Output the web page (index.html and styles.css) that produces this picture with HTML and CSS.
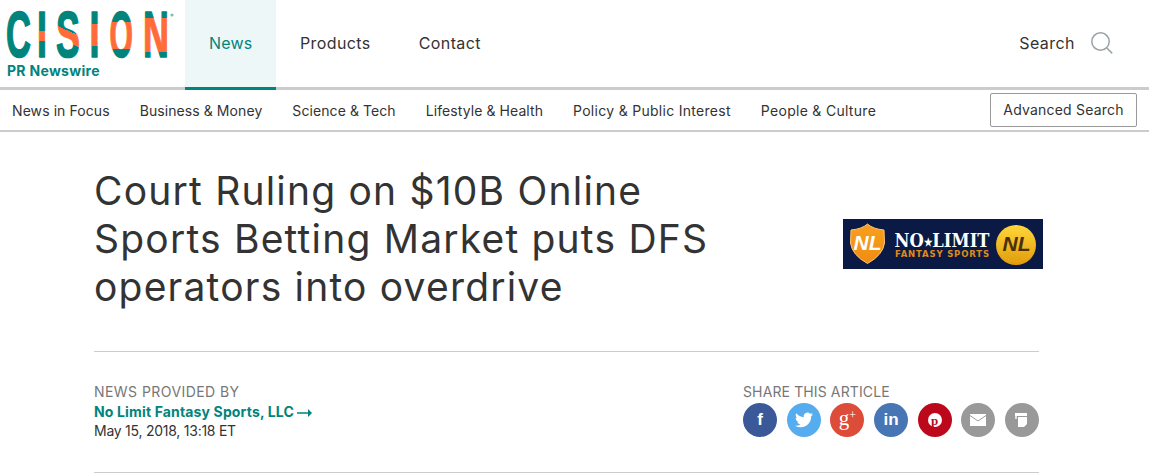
FILE: index.html
```html
<!DOCTYPE html>
<html lang="en">
<head>
<meta charset="utf-8">
<title>Court Ruling on $10B Online Sports Betting Market</title>
<link rel="stylesheet" href="styles.css">
</head>
<body>
<header class="topbar">
  <a class="logo" href="#">
    <svg class="logo-mark" width="172" height="50" viewBox="0 0 172 50" aria-label="Cision">
      <defs>
        <linearGradient id="gi1" gradientUnits="userSpaceOnUse" x1="0" y1="-46" x2="0" y2="0">
          <stop offset=".439" stop-color="#00847c"/><stop offset=".439" stop-color="#ff6c3a"/><stop offset=".657" stop-color="#ff6c3a"/><stop offset=".657" stop-color="#00847c"/>
        </linearGradient>
        <linearGradient id="gs" gradientUnits="userSpaceOnUse" x1="22.3" y1="-36" x2="15.2" y2="-6.8">
          <stop offset=".324" stop-color="#00847c"/><stop offset=".324" stop-color="#ff6c3a"/><stop offset=".713" stop-color="#ff6c3a"/><stop offset=".713" stop-color="#00847c"/>
        </linearGradient>
        <linearGradient id="gi2" gradientUnits="userSpaceOnUse" x1="0" y1="-46" x2="0" y2="0">
          <stop offset=".287" stop-color="#00847c"/><stop offset=".287" stop-color="#ff6c3a"/><stop offset=".765" stop-color="#ff6c3a"/><stop offset=".765" stop-color="#00847c"/>
        </linearGradient>
        <linearGradient id="go" gradientUnits="userSpaceOnUse" x1="0" y1="-46" x2="0" y2="0">
          <stop offset=".243" stop-color="#00847c"/><stop offset=".243" stop-color="#ff6c3a"/><stop offset=".83" stop-color="#ff6c3a"/><stop offset=".83" stop-color="#00847c"/>
        </linearGradient>
        <linearGradient id="gn" gradientUnits="userSpaceOnUse" x1="0" y1="-46" x2="0" y2="0">
          <stop offset=".15" stop-color="#00847c"/><stop offset=".15" stop-color="#ff6c3a"/><stop offset=".9" stop-color="#ff6c3a"/><stop offset=".9" stop-color="#00847c"/>
        </linearGradient>
      </defs>
      <g class="logo-letters">
        <text transform="translate(6 47.8) scale(.54 1)" fill="#00847c" stroke="#00847c">C</text>
        <text transform="translate(37 47.8) scale(.56 1)" fill="url(#gi1)" stroke="url(#gi1)">I</text>
        <text transform="translate(56 47.8) scale(.56 1)" fill="url(#gs)" stroke="url(#gs)">S</text>
        <text transform="translate(89.5 47.8) scale(.56 1)" fill="url(#gi2)" stroke="url(#gi2)">I</text>
        <text transform="translate(109.5 47.8) scale(.47 1)" fill="url(#go)" stroke="url(#go)">O</text>
        <text transform="translate(143 47.8) scale(.56 1)" fill="url(#gn)" stroke="url(#gn)">N</text>
      </g>
      <circle cx="172" cy="6" r="1.6" fill="#7fbcb8"/>
    </svg>
    <span class="logo-sub">PR Newswire</span>
  </a>
  <nav class="mainnav">
    <a class="mainnav-item is-active" href="#">News</a>
    <a class="mainnav-item" href="#">Products</a>
    <a class="mainnav-item" href="#">Contact</a>
  </nav>
  <div class="search">
    <span>Search</span>
    <svg width="24" height="24" viewBox="0 0 24 24" fill="none" stroke="#9aa2a6" stroke-width="1.5"><circle cx="10.5" cy="10.5" r="8.7"/><path d="M16.8 17l5.4 5.4"/></svg>
  </div>
</header>

<div class="subbar">
  <nav class="subnav">
    <a href="#">News in Focus</a>
    <a href="#">Business &amp; Money</a>
    <a href="#">Science &amp; Tech</a>
    <a href="#">Lifestyle &amp; Health</a>
    <a class="subnav-wide" href="#">Policy &amp; Public Interest</a>
    <a class="subnav-wide" href="#">People &amp; Culture</a>
  </nav>
  <a class="adv" href="#">Advanced Search</a>
</div>

<main class="article">
  <div class="headline-row">
    <h1>Court Ruling on $10B Online Sports Betting Market puts DFS operators into overdrive</h1>
    <svg class="banner" width="200" height="50" viewBox="0 0 200 50" aria-label="No Limit Fantasy Sports">
      <defs>
        <linearGradient id="coin" x1="0" y1="0" x2="0" y2="1"><stop offset="0" stop-color="#ffd83a"/><stop offset="1" stop-color="#e09a0c"/></linearGradient>
        <linearGradient id="shield" x1="0" y1="0" x2="0" y2="1"><stop offset="0" stop-color="#f9a01e"/><stop offset="1" stop-color="#ef8c12"/></linearGradient>
      </defs>
      <rect width="200" height="50" fill="#0a1a44"/>
      <path d="M8 11Q19 10 24.5 5Q30 10 41 11L41.5 24Q40 36 24.5 44.5Q9 36 7.5 24Z" fill="url(#shield)" stroke="#fbc67a" stroke-width="1"/>
      <text class="bn-mono" x="24.5" y="31" fill="#fff">NL</text>
      <text class="bn-main" x="51.5" y="28" textLength="95" lengthAdjust="spacingAndGlyphs">NO<tspan class="bn-star" dy="-1">★</tspan><tspan dy="1">LIMIT</tspan></text>
      <text class="bn-sub" x="52" y="37.5" textLength="94" lengthAdjust="spacing">FANTASY SPORTS</text>
      <circle cx="173" cy="26" r="20" fill="url(#coin)"/>
      <circle cx="173" cy="26" r="16.5" fill="none" stroke="#f6c02a" stroke-width=".8" stroke-dasharray="1 2"/>
      <text class="bn-mono" x="173.5" y="32" fill="#4a3006">NL</text>
    </svg>
  </div>

  <div class="meta">
    <div class="provider">
      <div class="label label-news">NEWS PROVIDED BY</div>
      <a class="provider-name" href="#">No Limit Fantasy Sports, LLC <svg class="arrow" width="15" height="8" viewBox="0 0 15 8"><path d="M0 3.2h11V0l4 4-4 4V4.8H0z" fill="#00847c"/></svg></a>
      <div class="date">May 15, 2018, 13:18 ET</div>
    </div>
    <div class="share">
      <div class="label label-share">SHARE THIS ARTICLE</div>
      <div class="share-icons">
        <a class="ic ic-fb" href="#">f</a>
        <a class="ic ic-tw" href="#"><svg width="18" height="18" viewBox="0 0 24 24" fill="#fff"><path d="M23.953 4.57a10 10 0 01-2.825.775 4.958 4.958 0 002.163-2.723c-.951.555-2.005.959-3.127 1.184a4.92 4.92 0 00-8.384 4.482C7.69 8.095 4.067 6.13 1.64 3.162a4.822 4.822 0 00-.666 2.475c0 1.71.87 3.213 2.188 4.096a4.904 4.904 0 01-2.228-.616v.06a4.923 4.923 0 003.946 4.827 4.996 4.996 0 01-2.212.085 4.936 4.936 0 004.604 3.417 9.867 9.867 0 01-6.102 2.105c-.39 0-.779-.023-1.17-.067a13.995 13.995 0 007.557 2.209c9.053 0 13.998-7.496 13.998-13.985 0-.21 0-.42-.015-.63A9.935 9.935 0 0024 4.59z"/></svg></a>
        <a class="ic ic-gp" href="#">g<span class="plus">+</span></a>
        <a class="ic ic-in" href="#">in</a>
        <a class="ic ic-pin" href="#"><span class="pin-disc">p</span></a>
        <a class="ic ic-mail" href="#"><svg width="16" height="12" viewBox="0 0 16 12"><rect width="16" height="12" fill="#fff"/><path d="M0 1.5l8 5.5 8-5.5" fill="none" stroke="#999" stroke-width="1"/></svg></a>
        <a class="ic ic-print" href="#"><svg width="13" height="14" viewBox="0 0 13 14" fill="#fff"><path d="M0 0h12v3H0z"/><path d="M0 3h2v3H0z" opacity=".7"/><path d="M3 4h9v7l-3 3H3z"/></svg></a>
      </div>
    </div>
  </div>
</main>
</body>
</html>
```
FILE: styles.css
```css
* { box-sizing: border-box; }
html, body { margin: 0; padding: 0; }
body {
  font-family: Inter, "Noto Sans", "Liberation Sans", sans-serif;
  color: #333;
  background: #fff;
  overflow: hidden;
}
a { color: inherit; text-decoration: none; }

.topbar {
  height: 90px;
  display: flex;
  align-items: stretch;
  border-bottom: 3px solid #ccc;
}
.logo {
  width: 185px;
  flex: none;
  display: flex;
  flex-direction: column;
  padding-top: 9px;
}
.logo-mark { display: block; overflow: visible; }
.logo-letters text {
  font-family: "Liberation Sans", sans-serif;
  font-weight: 700;
  font-size: 64px;
  stroke-width: 1.6;
  stroke-linejoin: round;
}
.logo-sub {
  margin: 4px 0 0 7px;
  font-size: 14px;
  line-height: 16px;
  font-weight: 700;
  letter-spacing: .3px;
  color: #00847c;
}
.mainnav { display: flex; align-items: stretch; height: 90px; }
.mainnav-item {
  display: flex;
  align-items: center;
  padding: 0 24px 5px;
  font-size: 16px;
  letter-spacing: .4px;
  height: 90px;
  color: #333;
}
.mainnav-item.is-active {
  width: 91px;
  background: #eef7f8;
  color: #00847c;
  border-bottom: 3px solid #00847c;
  padding-bottom: 2px;
  letter-spacing: .15px;
}
.search {
  margin-left: auto;
  padding: 0 35px 2px 0;
  display: flex;
  align-items: center;
  gap: 15px;
  font-size: 16px;
  letter-spacing: .45px;
}

.subbar {
  height: 42px;
  border-bottom: 2px solid #ccc;
  padding: 3px 12px 3px 12px;
  display: flex;
  align-items: center;
  justify-content: space-between;
}
.subnav { display: flex; gap: 30px; font-size: 14px; letter-spacing: .08px; }
.subnav-wide { letter-spacing: .29px; }
.adv {
  width: 147px;
  height: 34px;
  border: 1px solid #999;
  border-radius: 2px;
  font-size: 14px;
  letter-spacing: .2px;
  padding-bottom: 2px;
  display: flex;
  align-items: center;
  justify-content: center;
}

.article { margin: 0 110px 0 94px; }
.headline-row {
  display: flex;
  justify-content: space-between;
  align-items: center;
  padding: 35px 0 40px;
  border-bottom: 1px solid #ccc;
  height: 220px;
}
h1 {
  margin: 0;
  width: 680px;
  font-size: 39px;
  line-height: 48px;
  font-weight: 400;
  letter-spacing: 1.2px;
  color: #333;
}
.banner { display: block; margin-right: -4px; flex: none; margin-top: 9px; }
.bn-main { font: 700 19px "DejaVu Serif", serif; fill: #fff; }
.bn-star { font-size: 11px; }
.bn-sub { font: 700 8.5px "DejaVu Sans", sans-serif; fill: #e08a18; }
.bn-mono { font: italic 700 21px "Liberation Sans", sans-serif; text-anchor: middle; }

.meta {
  height: 121px;
  border-bottom: 1px solid #ccc;
  padding-top: 31px;
  display: flex;
  justify-content: space-between;
}
.label { font-size: 14px; line-height: 17px; color: #777; }
.label-news { letter-spacing: .44px; }
.label-share { letter-spacing: .12px; }
.provider-name {
  display: block;
  font-size: 14px;
  line-height: 20px;
  font-weight: 700;
  letter-spacing: .15px;
  color: #00847c;
  margin-top: 2px;
}
.arrow { display: inline-block; vertical-align: 0; }
.date { font-size: 14px; line-height: 17px; color: #333; letter-spacing: -.25px; }
.share { width: 296px; }
.share-icons { display: flex; justify-content: space-between; margin-top: 3px; }
.ic {
  width: 34px;
  height: 34px;
  border-radius: 50%;
  display: flex;
  align-items: center;
  justify-content: center;
  color: #fff;
}
.ic-fb { background: #3b5998; font: 700 17px "Liberation Sans", sans-serif; }
.ic-tw { background: #55acee; }
.ic-gp { background: #dd4b39; font: 400 21px/30px "Liberation Serif", serif; padding-bottom: 5px; }
.plus { font-size: 12px; margin-top: -5px; }
.ic-in { background: #4875b4; font: 700 17px "Liberation Sans", sans-serif; }
.ic-pin { background: #bd081c; }
.pin-disc {
  width: 14px;
  height: 14px;
  border-radius: 50%;
  background: #fff;
  color: #bd081c;
  font: 700 13px/13px "Liberation Serif", serif;
  display: flex;
  align-items: center;
  justify-content: center;
}
.ic-mail, .ic-print { background: #999; }
```
